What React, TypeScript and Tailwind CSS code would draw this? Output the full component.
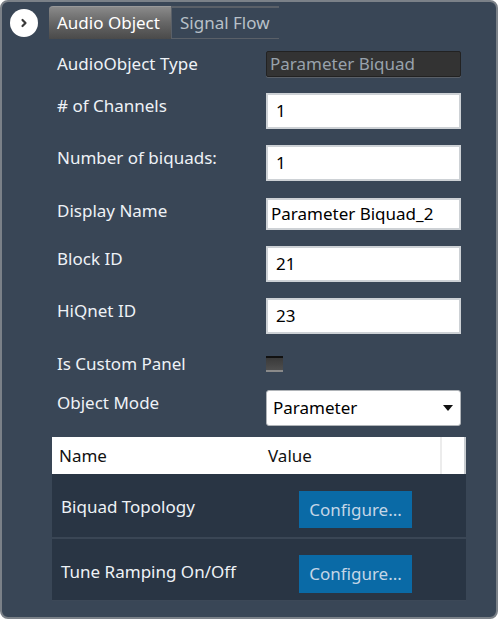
import React from "react";

const font = { fontFamily: '"Noto Sans", "Open Sans", sans-serif' };

function Row({
  label,
  children,
  mt,
  center,
}: {
  label: string;
  children: React.ReactNode;
  mt: string;
  center?: boolean;
}) {
  return (
    <div className={`flex ${center ? "items-center" : "items-start"} ${mt}`}>
      <div className={`w-[264px] pl-[55px] text-[17px] leading-[24px] text-[#eef2f6] ${center ? "" : "pt-[1px]"}`}>
        {label}
      </div>
      {children}
    </div>
  );
}

function TextBox({ value, h, pl = "pl-[8px]" }: { value: string; h: string; pl?: string }) {
  return (
    <div
      className={`w-[195px] ${h} bg-white border-2 border-[#cdd1d5] flex items-center ${pl} text-[17px] text-black`}
    >
      {value}
    </div>
  );
}

export default function App() {
  return (
    <div className="w-[499px] h-[620px] bg-white" style={font}>
      <div className="w-[498px] h-[619px] bg-[#394656] border-2 border-[#7b8188] rounded-[8px] relative overflow-hidden">
        {/* header */}
        <div className="flex items-start pt-[4px]">
          <div className="ml-[8px] mt-[3px] w-[28px] h-[28px] rounded-full bg-white flex items-center justify-center">
            <svg width="10" height="10" viewBox="0 0 10 10">
              <path d="M3.5 2 L6.5 5 L3.5 8" stroke="#3a3a3a" strokeWidth="2.2" fill="none" strokeLinecap="round" strokeLinejoin="round" />
            </svg>
          </div>
          <div className="flex ml-[11px]">
            <div className="w-[122px] h-[33px] rounded-tl-[4px] bg-gradient-to-b from-[#8a8a8a] via-[#666] to-[#4a4a4a] text-white text-[17px] flex items-center pl-[8px] border-t border-[#999]">
              Audio Object
            </div>
            <div className="w-[108px] h-[33px] border-t-2 border-b border-l border-[#5a6068] text-[#b8c0c8] text-[17px] flex items-center pl-[8px]">
              Signal Flow
            </div>
          </div>
        </div>

        {/* form */}
        <div className="flex flex-col">
          <Row label="AudioObject Type" mt="mt-[12px]" center>
            <div className="w-[195px] h-[26px] bg-[#333333] border border-[#222] rounded-[2px] flex items-center pl-[3px] text-[17px] text-[#98a2ac] shadow-[0_1px_0_#5a6068]">
              Parameter Biquad
            </div>
          </Row>
          <Row label="# of Channels" mt="mt-[16px]">
            <TextBox value="1" h="h-[36px]" />
          </Row>
          <Row label="Number of biquads:" mt="mt-[16px]">
            <TextBox value="1" h="h-[36px]" />
          </Row>
          <Row label="Display Name" mt="mt-[17px]">
            <TextBox value="Parameter Biquad_2" h="h-[32px]" pl="pl-[3px]" />
          </Row>
          <Row label="Block ID" mt="mt-[16px]">
            <TextBox value="21" h="h-[36px]" />
          </Row>
          <Row label="HiQnet ID" mt="mt-[16px]">
            <TextBox value="23" h="h-[36px]" />
          </Row>
          <Row label="Is Custom Panel" mt="mt-[18px]" center>
            <div className="h-[24px] flex items-center">
              <div className="w-[17px] h-[16px] bg-gradient-to-b from-[#3a3a3a] to-[#4e4e4e] border-t-2 border-t-[#111] border-b-2 border-b-[#8a8a8a]" />
            </div>
          </Row>
          <Row label="Object Mode" mt="mt-[14px]">
            <div className="w-[195px] h-[36px] bg-white border border-[#b0b4b8] rounded-[3px] flex items-center justify-between pl-[6px] pr-[7px] text-[17px] text-black">
              <span>Parameter</span>
              <svg width="10" height="6" viewBox="0 0 10 6">
                <path d="M0 0 L10 0 L5 6 Z" fill="#111" />
              </svg>
            </div>
          </Row>
        </div>

        {/* table */}
        <div className="ml-[50px] mt-[11px] w-[414px]">
          <div className="h-[37px] bg-white flex items-center text-[17px] text-[#111] border-r-2 border-[#c8ccd0]">
            <div className="w-[216px] pl-[7px]">Name</div>
            <div className="flex-1">Value</div>
            <div className="w-[2px] h-full bg-[#ececec] mr-[22px]" />
          </div>
          <div className="h-[63px] bg-[#293544] flex items-start text-[17px] text-[#eef2f6]">
            <div className="w-[247px] pl-[9px] pt-[21px] leading-[24px]">Biquad Topology</div>
            <div className="mt-[17px] w-[113px] h-[37px] bg-[#0a6aa6] text-[#c4d6e6] flex items-center justify-center">
              Configure...
            </div>
          </div>
          <div className="h-[2px] bg-[#3a4655]" />
          <div className="h-[62px] bg-[#293544] flex items-start text-[17px] text-[#eef2f6] border-b border-[#3c4857]">
            <div className="w-[247px] pl-[9px] pt-[21px] leading-[24px]">Tune Ramping On/Off</div>
            <div className="mt-[16px] w-[113px] h-[38px] bg-[#0a6aa6] text-[#c4d6e6] flex items-center justify-center">
              Configure...
            </div>
          </div>
        </div>
      </div>
    </div>
  );
}
